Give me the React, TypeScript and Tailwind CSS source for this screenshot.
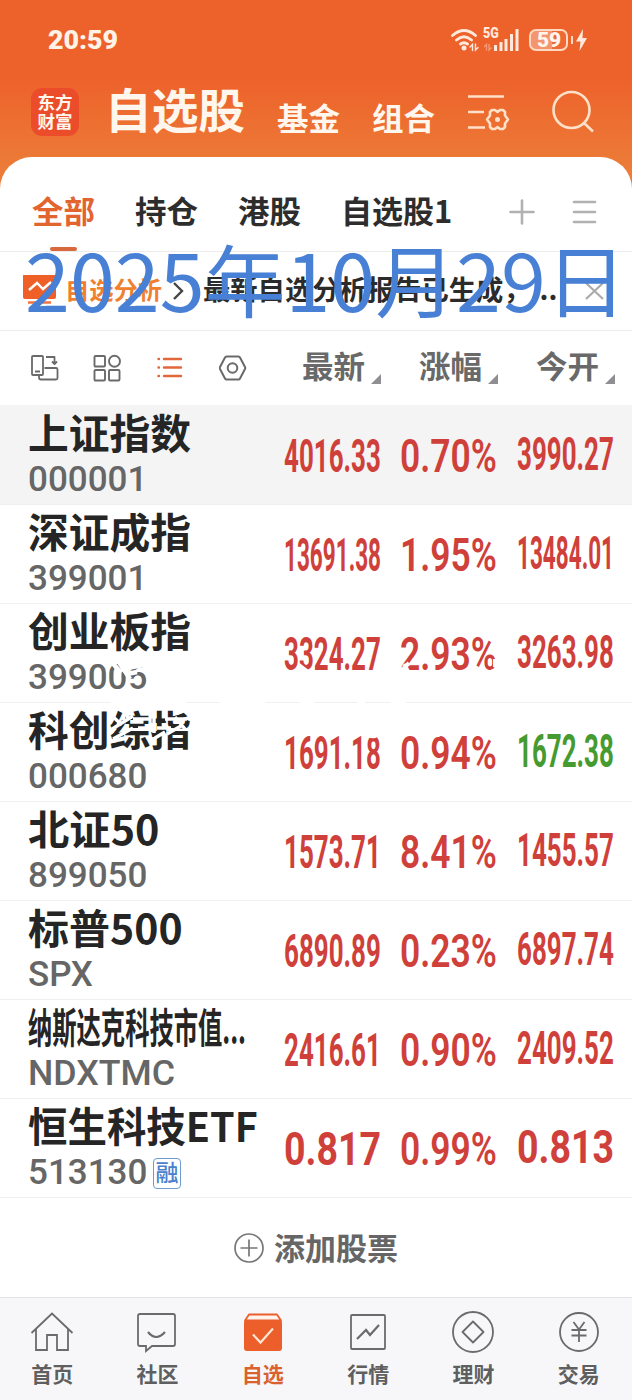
import { useLayoutEffect, useRef, useState } from "react";
import type { ReactNode } from "react";
import clsx from "clsx";

type Stock = {
  name: string;
  nameWidth: number;
  code: string;
  codeWidth: number;
  price: string;
  change: string;
  open: string;
  openDown?: boolean;
  margin?: boolean;
};

const stocks: Stock[] = [
  { name: "上证指数", nameWidth: 163, code: "000001", codeWidth: 119, price: "4016.33", change: "0.70%", open: "3990.27" },
  { name: "深证成指", nameWidth: 163, code: "399001", codeWidth: 119, price: "13691.38", change: "1.95%", open: "13484.01" },
  { name: "创业板指", nameWidth: 163, code: "399006", codeWidth: 119, price: "3324.27", change: "2.93%", open: "3263.98" },
  { name: "科创综指", nameWidth: 163, code: "000680", codeWidth: 119, price: "1691.18", change: "0.94%", open: "1672.38", openDown: true },
  { name: "北证50", nameWidth: 131, code: "899050", codeWidth: 119, price: "1573.71", change: "8.41%", open: "1455.57" },
  { name: "标普500", nameWidth: 155, code: "SPX", codeWidth: 65, price: "6890.89", change: "0.23%", open: "6897.74" },
  { name: "纳斯达克科技市值...", nameWidth: 218, code: "NDXTMC", codeWidth: 147, price: "2416.61", change: "0.90%", open: "2409.52" },
  { name: "恒生科技ETF", nameWidth: 230, code: "513130", codeWidth: 119, price: "0.817", change: "0.99%", open: "0.813", margin: true },
];

const CJK = "font-['Noto_Sans_CJK_SC',sans-serif]";
const NUM = "font-[Roboto,'Noto_Sans_CJK_SC',sans-serif]";

/** Squeezes or stretches one line of text to the given width. */
const Fit = ({ width, className, children }: { width: number; className?: string; children: ReactNode }) => {
  const ref = useRef<HTMLSpanElement>(null);
  const [scale, setScale] = useState(1);

  useLayoutEffect(() => {
    if (ref.current) setScale(width / ref.current.offsetWidth);
  }, [width, children]);

  return (
    <span className={clsx("block shrink-0 whitespace-nowrap", className)} style={{ width }}>
      <span ref={ref} className="inline-block origin-left" style={{ transform: `scaleX(${scale})` }}>
        {children}
      </span>
    </span>
  );
};

const StatusBar = () => (
  <div className="flex h-20 items-center justify-between pl-12 pr-11">
    <Fit width={70} className="font-[Roboto,sans-serif] text-[26px] leading-8 font-black text-[#fff3e8]">
      20:59
    </Fit>
    <div className="flex items-center text-[#ffe9dc]">
      <svg width="30" height="26" viewBox="0 0 30 26" fill="none" stroke="currentColor" strokeWidth="2.8" strokeLinecap="round">
        <path d="M2.500 8.500Q14 -1.500 25.500 8.500M6.500 13Q14 6.500 21.500 13M10.500 17Q14 14.500 17.500 17" />
        <circle cx="14" cy="21" r="2.500" fill="currentColor" stroke="none" />
        <path d="M20 20l2.500-2.500v6M25.500 17v6l2.500-2.500" strokeWidth="1.400" />
      </svg>
      <div className="relative ml-[3px] h-[26px] w-[38px]">
        <Fit width={16} className="-mt-px font-[Roboto,sans-serif] text-[14px] leading-[14px] font-black">5G</Fit>
        <svg className="absolute inset-0" width="38" height="26" viewBox="0 0 38 26" fill="currentColor">
          <path d="M11 18h3v6h-3zM16.500 15h3v9h-3zM21.500 12h3v12h-3zM27 7h3v17h-3zM32.500 2h3v22h-3z" />
          <path d="M1 20l2.500-2.500v6M6 17v6l2.500-2.500" fill="none" stroke="currentColor" strokeWidth="1.400" opacity=".4" />
        </svg>
      </div>
      <div className="ml-2 flex h-[22px] w-[39px] items-center justify-center rounded-[7px] border-2 border-[#ffd9c2] bg-linear-to-r from-[#f3966f] from-60% to-[#ee6a35] to-60%">
        <Fit width={24} className="font-[Roboto,sans-serif] text-[20px] leading-5 font-black text-[#fff5ec]">59</Fit>
      </div>
      <div className="ml-[3px] h-2 w-[2px] bg-[#ffd9c2]" />
      <svg className="ml-[2px]" width="13" height="22" viewBox="0 0 13 22" fill="currentColor">
        <path d="M8 0L1 12.500h4.500L4.500 22L12 9H7.500z" />
      </svg>
    </div>
  </div>
);

const Header = () => (
  <div className={clsx("flex h-[77px] items-start text-[#fff7ee]", CJK)}>
    <div className="ml-[31px] mt-2 flex h-12 w-12 flex-col items-center justify-center rounded-[11px] bg-[#eb4d2b] pb-[2px] text-[17.500px] leading-[19px] font-bold">
      <span>东方</span>
      <span>财富</span>
    </div>
    <Fit width={140} className="ml-[26px] text-[47px] leading-[56px] font-bold">自选股</Fit>
    <Fit width={63} className="ml-8 mt-[17px] text-[31px] leading-10 font-bold">基金</Fit>
    <Fit width={63} className="ml-8 mt-[17px] text-[31px] leading-10 font-bold">组合</Fit>
    <svg className="ml-[33px] mt-3" width="44" height="42" viewBox="0 0 44 42" fill="none" stroke="#ffe0c8" strokeWidth="2.600">
      <path d="M0 4.500h36M0 20h16M0 35.500h17" />
      <path
        d="M24 18h3l2.500 2 2.500-2h3l2 2v3.500l3 4-3 4v3.500l-2 2h-3l-2.500-2-2.500 2h-3l-2-2v-3.500l-3-4 3-4V20z"
        strokeLinejoin="round"
      />
      <circle cx="29.500" cy="27.500" r="2.500" fill="#ffe0c8" stroke="none" />
    </svg>
    <svg className="ml-[39px] mt-[10px]" width="44" height="44" viewBox="0 0 44 44" fill="none" stroke="#ffe0c8" strokeWidth="2.600">
      <circle cx="20.500" cy="20" r="18" />
      <path d="M33 33l9 8.500" />
    </svg>
  </div>
);

const Tabs = () => (
  <div className={clsx("flex h-[95px] items-start border-b border-[#ececec] pl-8 pt-[33px] text-[31px] leading-10 font-bold text-[#2d2d2d]", CJK)}>
    <div className="flex flex-col items-center text-[#e2642f]">
      <Fit width={63}>全部</Fit>
      <div className="mt-[17px] h-1 w-[27px] rounded-full bg-[#d9683c]" />
    </div>
    <Fit width={63} className="ml-10">持仓</Fit>
    <Fit width={63} className="ml-10">港股</Fit>
    <Fit width={111} className="ml-10">自选股1</Fit>
    <svg className="ml-[57px] mt-[9px]" width="26" height="26" viewBox="0 0 26 26" stroke="#b1b1b1" strokeWidth="2.600" strokeLinecap="round">
      <path d="M1.500 13h23M13 1.500v23" />
    </svg>
    <svg className="ml-[37px] mt-[9px]" width="26" height="26" viewBox="0 0 26 26" stroke="#b1b1b1" strokeWidth="2.600" strokeLinecap="round">
      <path d="M2 3h21M2 13h21M2 23h21" />
    </svg>
  </div>
);

const Banner = () => (
  <div className={clsx("relative flex h-[79px] items-center border-b border-[#ececec] pl-[23px] font-bold", CJK)}>
    <svg width="33" height="32" viewBox="0 0 33 32" fill="none">
      <rect width="33" height="25" rx="2" y="-1" fill="#ee6028" />
      <path d="M5 27.500h23" stroke="#ee7440" strokeWidth="2.500" />
      <path d="M6 15l8-7 6 6 8-7" stroke="#fff" strokeWidth="2.400" />
    </svg>
    <Fit width={97} className="ml-[9px] -mt-1 text-[24px] leading-9 text-[#f08030]">自选分析</Fit>
    <svg className="ml-[11px]" width="12" height="18" viewBox="0 0 12 18" fill="none" stroke="#444" strokeWidth="2.400">
      <path d="M1 1l8 8-8 8" />
    </svg>
    <Fit width={354} className="ml-[18px] -mt-1 text-[27px] leading-10 text-[#2b2b2b]">最新自选分析报告已生成，...</Fit>
    <svg className="ml-[28px]" width="20" height="18" viewBox="0 0 20 18" stroke="#aaa" strokeWidth="2.200">
      <path d="M1 1l17 16M18 1L1 17" />
    </svg>
    <div className="pointer-events-none absolute left-[25px] -top-[34px] z-10 text-[79px] leading-[120px] font-normal text-[#4880d6]">
      <Fit width={602}>2025年10月29日</Fit>
    </div>
  </div>
);

const SortHead = ({ label }: { label: string }) => (
  <div className="flex w-[81px] items-end">
    <Fit width={63} className="-mt-[3px] mb-[3px]">{label}</Fit>
    <svg className="mb-1 ml-[6px]" width="10" height="10" viewBox="0 0 10 10" fill="#8e8e93">
      <path d="M10 0v10H0z" />
    </svg>
  </div>
);

const ColumnHead = () => (
  <div className={clsx("flex h-[74px] items-center pl-[30px] text-[31px] leading-10 font-bold text-[#696969]", CJK)}>
    <div className="flex gap-[34px]">
      <svg width="29" height="28" viewBox="0 0 29 28" fill="none" stroke="#6a6a6a" strokeWidth="1.800" strokeLinejoin="round">
        <rect x="2" y="2" width="11" height="19" rx="1" />
        <path d="M5 17.500h5M16 3h8.500v6.500M22 7.500l2.500 2.500 2.500-2.500M14.500 14H26q1.500 0 1.500 1.500V24q0 1.500-1.500 1.500H11Q9 25.500 9 23.500V21.500" />
      </svg>
      <svg width="29" height="28" viewBox="0 0 29 28" fill="none" stroke="#6a6a6a" strokeWidth="1.900">
        <rect x="1.500" y="2" width="10.500" height="10.500" rx="1" />
        <circle cx="21.500" cy="7.200" r="5.500" />
        <rect x="1.500" y="16" width="10.500" height="10.500" rx="1" />
        <rect x="16" y="16" width="10.500" height="10.500" rx="1" />
      </svg>
      <svg width="29" height="28" viewBox="0 0 29 28" stroke="#e2683c" strokeWidth="2.400" strokeLinecap="round">
        <path d="M2.500 5h.5M8 5h17M2.500 13.500h.5M8 13.500h17M2.500 22h.5M8 22h17" />
      </svg>
      <svg width="29" height="28" viewBox="0 0 29 28" fill="none" stroke="#6a6a6a" strokeWidth="2" strokeLinejoin="round">
        <path d="M7.500 2.500h12q1 0 1.500 1L26 13q.5 1 0 2L21 24.500q-.5 1-1.500 1h-12q-1 0-1.500-1L1 15q-.5-1 0-2L6 3.500q.5-1 1.500-1z" />
        <circle cx="13.500" cy="14" r="4.800" />
      </svg>
    </div>
    <div className="ml-[54px] flex gap-9">
      <SortHead label="最新" />
      <SortHead label="涨幅" />
      <SortHead label="今开" />
    </div>
  </div>
);

const StockRow = ({ stock, active }: { stock: Stock; active: boolean }) => (
  <div className={clsx("flex h-[99px] items-start border-t pl-7", active ? "border-[#f4f4f4] bg-[#f4f4f4]" : "border-[#f0f0f0]", NUM)}>
    <div className="w-[256px] shrink-0">
      <Fit width={stock.nameWidth} className="-mt-[3px] h-[59px] text-[41px] leading-[56px] font-bold text-[#252525] font-['Noto_Sans_CJK_SC',sans-serif]">
        {stock.name}
      </Fit>
      <div className="flex h-9 items-center">
        <Fit width={stock.codeWidth} className="text-[35px] leading-9 font-medium text-[#666]">{stock.code}</Fit>
        {stock.margin && (
          <span className="ml-[6px] flex h-[31px] w-7 items-center justify-center rounded-[4px] border border-[#6d9ad0] text-[23px] leading-none font-medium text-[#4a80cc]">
            融
          </span>
        )}
      </div>
    </div>
    <Fit width={97} className="mt-[25px] text-[46px] leading-[50px] font-bold text-[#d0403a]">{stock.price}</Fit>
    <Fit width={97} className="ml-[19px] mt-[25px] text-[46px] leading-[50px] font-semibold text-[#d0403a]">{stock.change}</Fit>
    <Fit
      width={97}
      className={clsx("ml-5 mt-[23px] text-[46px] leading-[50px] font-bold", stock.openDown ? "text-[#459a30]" : "text-[#d0403a]")}
    >
      {stock.open}
    </Fit>
  </div>
);

/** Faint white handwriting that runs over the third and fourth rows. */
const WhiteStrokes = () => (
  <svg className="pointer-events-none absolute left-[105px] top-[250px]" width="400" height="100" viewBox="0 0 400 100" fill="none" stroke="#fff" strokeWidth="3">
    <path d="M6 6l10 12M12 4l13 20M22 13l22-4M22 19l10 -2M28 3l4 8M22 26h8" strokeWidth="4.500" />
    <path d="M6 48h75M115 48h45M195 48h14M252 48h8M286 48h15" strokeWidth="4" />
    <path d="M6 60l11 10M4 76l24-15M8 84l20-11M18 55l6 9M28 64h18M60 64h22M33 73h14M49 58v20M52 73h14M50 83l10-6M62 79l14-8M70 62l10 12" strokeWidth="3.500" />
    <path d="M194 10q8 6 14 11M296 16l8-8M299 9l8 15M384 18q4-3 10-2M390 4v8" strokeWidth="4" />
    <path d="M262 80q6 4 12-1M325 79q6 4 13-1M366 79l8-1" />
  </svg>
);

const navItems: { label: string; icon: ReactNode }[] = [
  { label: "首页", icon: <path d="M1.500 21L22 1.500 42.500 21M6 17v21h11V23h10v15h11V17" /> },
  {
    label: "社区",
    icon: (
      <>
        <path d="M5 2h33q2 0 2 2v28q0 2-2 2H17l-6 5v-5H5q-2 0-2-2V4q0-2 2-2z" />
        <path d="M13 20q8 10 17 0" strokeWidth="2.200" />
      </>
    ),
  },
  {
    label: "自选",
    icon: (
      <>
        <path d="M8 2.500h28l4 6H4z" fill="#fff3ed" stroke="#ec5f2a" strokeLinejoin="round" />
        <rect x="3" y="8" width="38" height="31" rx="3" fill="#ec5f2a" stroke="none" />
        <path d="M12 22.500l7.500 8L32 16.500" stroke="#ffe6d4" strokeWidth="2.200" />
      </>
    ),
  },
  {
    label: "行情",
    icon: (
      <>
        <rect x="5" y="3" width="34" height="34" rx="1" />
        <path d="M11 27l9-9 4 5 9-10" strokeWidth="2.200" />
      </>
    ),
  },
  {
    label: "理财",
    icon: (
      <>
        <circle cx="22" cy="20" r="20" />
        <path d="M22 9.500L32.500 20 22 30.500 11.500 20z" strokeLinejoin="round" />
      </>
    ),
  },
  {
    label: "交易",
    icon: (
      <>
        <circle cx="22" cy="20" r="19" />
        <path d="M16.500 10l5.500 7.500L27.500 10M22 17.500V30M14.500 18h15M14.500 23.500h15" />
      </>
    ),
  },
];

const BottomNav = () => (
  <nav className={clsx("grid h-[103px] grid-cols-6 border-t border-[#e4e4e6] bg-[#f7f7fa]", CJK)}>
    {navItems.map((item) => (
      <div key={item.label} className={clsx("flex flex-col items-center pt-3 pr-px", item.label === "自选" ? "text-[#d9622f]" : "text-[#5f5f5f]")}>
        <svg className="overflow-visible" width="44" height="44" viewBox="0 -2 44 44" fill="none" stroke="#6b6b6b" strokeWidth="1.800">
          {item.icon}
        </svg>
        <span className="mt-1 text-[21px] leading-[30px] font-bold">{item.label}</span>
      </div>
    ))}
  </nav>
);

export default function App() {
  return (
    <div className="flex h-[1400px] w-[632px] flex-col overflow-hidden bg-linear-to-b from-[#ed622b] from-[80px] to-[#ec7c38] to-[170px]">
      <StatusBar />
      <Header />
      <main className="flex flex-1 flex-col rounded-t-[32px] bg-white">
        <Tabs />
        <Banner />
        <ColumnHead />
        <div className="relative">
          {stocks.map((stock, i) => (
            <StockRow key={stock.name} stock={stock} active={i === 0} />
          ))}
          <WhiteStrokes />
        </div>
        <button className={clsx("flex flex-1 items-center justify-center gap-[10px] border-t border-[#f0f0f0] text-[31px] leading-10 font-bold text-[#666]", CJK)}>
          <svg width="30" height="30" viewBox="0 0 30 30" fill="none" stroke="#777" strokeWidth="1.700">
            <circle cx="15" cy="15" r="14" />
            <path d="M6.500 15h17M15 6.500v17" />
          </svg>
          <span className="-mt-[2px]">添加股票</span>
        </button>
      </main>
      <BottomNav />
    </div>
  );
}
